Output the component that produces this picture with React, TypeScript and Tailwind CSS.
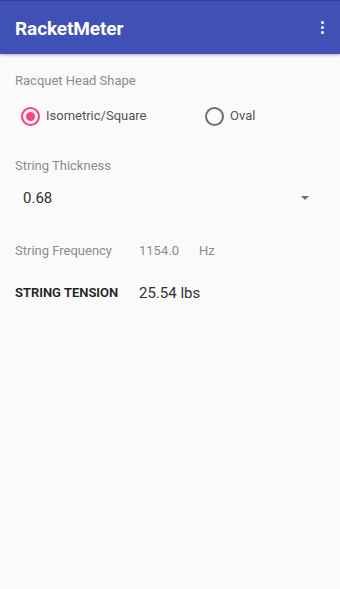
export default function App() {
  return (
    <div className="min-h-[589px] w-[340px] bg-[#fafafa] font-['Roboto',sans-serif]">
      <header className="flex h-[54px] items-center justify-between border-t border-[#32408f] bg-[#3f51b5] pl-[15px] pr-[15px] shadow-[0_1px_3px_rgba(0,0,0,0.3)]">
        <h1 className="pt-[4px] text-[19px] font-bold tracking-[-0.1px] text-white">RacketMeter</h1>
        <div className="flex flex-col gap-[2px] pr-[1px]">
          <span className="h-[3px] w-[3px] rounded-full bg-white" />
          <span className="h-[3px] w-[3px] rounded-full bg-white" />
          <span className="h-[3px] w-[3px] rounded-full bg-white" />
        </div>
      </header>

      <main className="px-[15px]">
        <p className="mt-[19px] text-[13px] leading-[16px] text-[#8c8c8c]">Racquet Head Shape</p>

        <div className="mt-[15px] flex h-[24px] items-center">
          <label className="flex w-[190px] items-center pl-[6px]">
            <span className="flex h-[19px] w-[19px] items-center justify-center rounded-full border-2 border-[#ff4081]">
              <span className="h-[9px] w-[9px] rounded-full bg-[#ff4081]" />
            </span>
            <span className="ml-[6px] text-[13px] text-[#555]">Isometric/Square</span>
          </label>
          <label className="flex items-center">
            <span className="h-[19px] w-[19px] rounded-full border-2 border-[#6f6f6f]" />
            <span className="ml-[6px] text-[13px] text-[#555]">Oval</span>
          </label>
        </div>

        <p className="mt-[30px] text-[13px] leading-[16px] text-[#8c8c8c]">String Thickness</p>

        <div className="mt-[14px] flex h-[20px] items-center justify-between pl-[8px] pr-[16px]">
          <span className="text-[15px] text-[#333]">0.68</span>
          <span className="h-0 w-0 border-x-[4px] border-t-[4px] border-x-transparent border-t-[#707070]" />
        </div>

        <div className="mt-[35px] flex h-[16px] items-center text-[13px] text-[#8c8c8c]">
          <span className="w-[124px]">String Frequency</span>
          <span className="w-[60px]">1154.0</span>
          <span>Hz</span>
        </div>

        <div className="mt-[24px] flex h-[20px] items-center">
          <span className="w-[124px] text-[13px] font-semibold text-[#222]">STRING TENSION</span>
          <span className="text-[15px] text-[#333]">25.54 lbs</span>
        </div>
      </main>
    </div>
  );
}
